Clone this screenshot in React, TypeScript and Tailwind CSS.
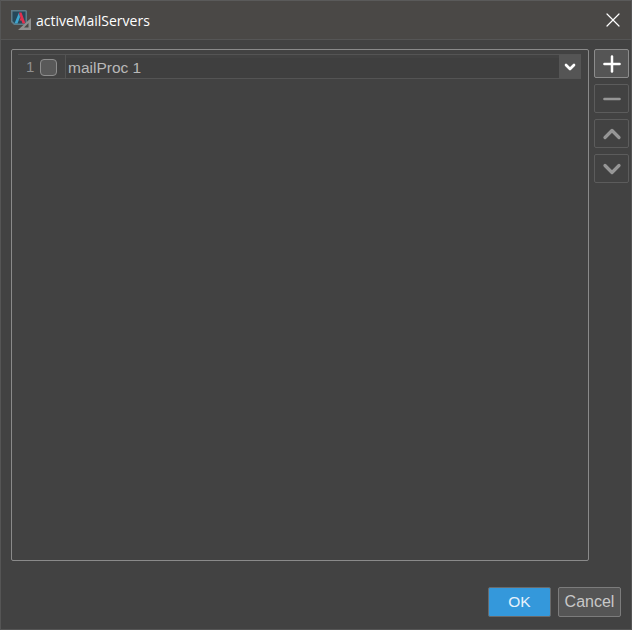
import { Plus, Minus, ChevronUp, ChevronDown, X } from "lucide-react";

function SideButton({ active, children }: { active?: boolean; children: React.ReactNode }) {
  return (
    <button
      className={
        active
          ? "w-[35px] h-[29px] flex items-center justify-center rounded-[2px] border border-[#8c8c8c] bg-[#555555] text-white"
          : "w-[35px] h-[29px] flex items-center justify-center rounded-[2px] border border-[#5c5c5c] bg-[#424242] text-[#969696]"
      }
    >
      {children}
    </button>
  );
}

export default function App() {
  return (
    <div className="w-[632px] h-[630px] flex flex-col bg-[#424242] border-x border-b border-[#555555] font-['Liberation_Sans',Arial,sans-serif] overflow-hidden">
      {/* title bar */}
      <div className="h-10 shrink-0 flex items-center pl-[10px] pr-[6px] bg-[#4a4846] border-b border-[#555555] border-t border-t-[#5a5a5a]">
        <svg width="20" height="20" viewBox="0 0 20 20" className="shrink-0">
          <path d="M0 0h15l1 1v14H3L0 12z" fill="#5f7c88" />
          <path d="M1.500 1.500h13v12H4L1.500 11z" fill="#26485a" />
          <path d="M8 2.500l-4.500 11h3l2.500-6.500z" fill="#3fa6cf" />
          <path d="M8 2.500h2.500l4 11h-3l-1-3H8.500L9.500 8z" fill="#e0304e" />
          <path d="M20 8v12H7z" fill="#8f8f8f" />
          <path d="M17.500 13v4.500h-4.500z" fill="#4a4846" />
        </svg>
        <span className="ml-[5px] text-[14px] text-white font-['Open_Sans',sans-serif]">activeMailServers</span>
        <X size={24} strokeWidth={1.2} className="ml-auto text-white" />
      </div>

      <div className="flex-1 flex flex-col pl-[10px] pr-[1px] pt-[9px] pb-[12px]">
        <div className="flex-1 flex gap-[5px]">
          {/* table panel */}
          <div className="w-[578px] h-[512px] shrink-0 border border-[#8a8a8a] rounded-[2px] pt-[4px] pl-[6px] pr-[7px]">
            <div className="flex h-[25px] border-y border-[#545454] items-center">
              <span className="w-[14px] ml-[8px] mt-[2px] text-[15px] text-[#8f8f8f]">1</span>
              <span className="w-[17px] h-[17px] mt-[2px] rounded-[4px] border border-[#8e8e8e] bg-[#595959]" />
              <span className="w-px h-full ml-[8px] bg-[#545454]" />
              <div className="flex-1 h-full flex items-end">
                <div className="w-full h-[20px] flex items-center bg-[#3f3f3f] pl-[2px] text-[15.5px] text-[#b8b8b8]">mailProc 1</div>
              </div>
              <div className="w-[22px] h-full flex items-center justify-center bg-[#555555] text-white">
                <ChevronDown size={16} strokeWidth={4} />
              </div>
            </div>
          </div>
          {/* side buttons */}
          <div className="flex flex-col gap-[6px]">
            <SideButton active><Plus size={26} strokeWidth={2.3} /></SideButton>
            <SideButton><Minus size={26} strokeWidth={2.3} /></SideButton>
            <SideButton><ChevronUp size={28} strokeWidth={2.8} /></SideButton>
            <SideButton><ChevronDown size={28} strokeWidth={2.8} /></SideButton>
          </div>
        </div>
        {/* footer */}
        <div className="flex justify-end gap-[7px] pr-[9px]">
          <button className="w-[63px] h-[30px] rounded-[2px] border border-[#6a6a6a] bg-[#3498db] text-[15.5px] text-[#e6f2fb]">OK</button>
          <button className="w-[63px] h-[30px] rounded-[2px] border border-[#7c7c7c] bg-[#555555] text-[16px] text-[#c8c8c8]">Cancel</button>
        </div>
      </div>
    </div>
  );
}
